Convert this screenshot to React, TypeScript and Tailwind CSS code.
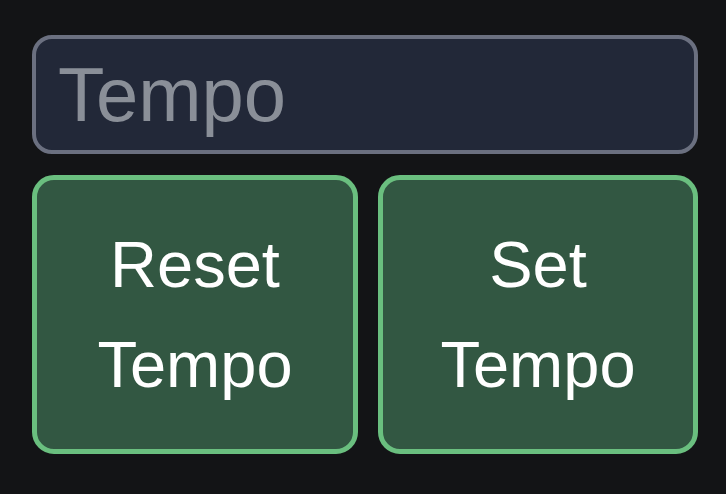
import React from 'react';

const TempoControls: React.FC = () => {
  return (
    <div className="flex flex-col gap-[21px] w-[666px]">
      <input
        type="text"
        placeholder="Tempo"
        className="w-full h-[119px] rounded-[20px] border-4 border-[#6b7080] bg-[#222838] px-[22px] text-[76px] leading-none text-white placeholder:text-[#8a8f98] outline-none"
      />
      <div className="flex gap-[20px]">
        <button className="w-[326px] h-[279px] rounded-[22px] border-[5px] border-[#6abf7f] bg-[#325742] text-[65px] leading-[100px] text-white">
          Reset
          <br />
          Tempo
        </button>
        <button className="w-[320px] h-[279px] rounded-[22px] border-[5px] border-[#6abf7f] bg-[#325742] text-[65px] leading-[100px] text-white">
          Set
          <br />
          Tempo
        </button>
      </div>
    </div>
  );
};

export default function App() {
  return (
    <div
      className="w-[726px] h-[494px] bg-[#131416] pl-[32px] pt-[35px]"
      style={{ fontFamily: '"Liberation Sans", Arial, sans-serif' }}
    >
      <TempoControls />
    </div>
  );
}
